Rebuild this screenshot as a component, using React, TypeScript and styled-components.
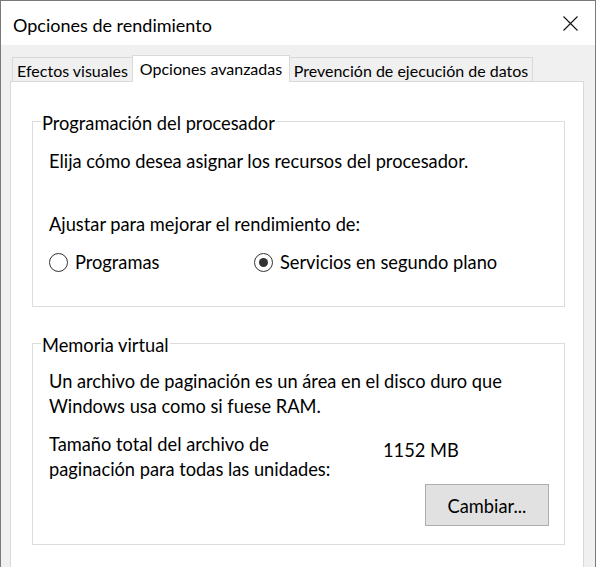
import React from "react";
import styled, { createGlobalStyle } from "styled-components";

const GlobalStyle = createGlobalStyle`
  html, body {
    margin: 0;
    padding: 0;
    overflow: hidden;
    background: #ffffff;
  }
  body {
    font-family: "Lato", "Noto Sans", sans-serif;
    color: #000000;
  }
`;

const Window = styled.div`
  width: 596px;
  height: 590px;
  box-sizing: border-box;
  border: 1px solid #7a7a7a;
  border-bottom: none;
  display: flex;
  flex-direction: column;
  background: #f0f0f0;
`;

const TitleBar = styled.div`
  height: 44px;
  background: #ffffff;
  display: flex;
  align-items: center;
  justify-content: space-between;
  padding-left: 12px;
`;

const Title = styled.div`
  font-size: 18px;
  line-height: 22px;
  padding-top: 3px;
`;

const CloseButton = styled.div`
  width: 47px;
  height: 44px;
  display: flex;
  align-items: center;
  justify-content: center;
  margin-right: 1px;
`;

const Body = styled.div`
  flex: 1;
  display: flex;
  flex-direction: column;
  padding: 10px 11px 0 9px;
`;

const TabStrip = styled.div`
  display: flex;
  align-items: flex-end;
  height: 26px;
  padding-left: 2px;
`;

const Tab = styled.div<{ $w: number; $active?: boolean }>`
  width: ${(p) => p.$w}px;
  box-sizing: border-box;
  height: ${(p) => (p.$active ? 27 : 24)}px;
  margin-bottom: ${(p) => (p.$active ? -1 : 0)}px;
  padding-top: 2px;
  position: relative;
  z-index: ${(p) => (p.$active ? 1 : 0)};
  background: ${(p) => (p.$active ? "#ffffff" : "#f0f0f0")};
  border-top: 1px solid #d9d9d9;
  border-left: ${(p) => (p.$active ? "1px solid #d9d9d9" : "none")};
  border-right: ${(p) => (p.$active ? "1px solid #d9d9d9" : "none")};
  font-size: 16px;
  line-height: 22px;
  text-align: center;
  white-space: nowrap;

  &:first-child {
    border-left: 1px solid #d9d9d9;
  }
  &:last-child {
    border-right: 1px solid #d9d9d9;
  }
`;

const Panel = styled.div`
  flex: 1;
  background: #ffffff;
  border: 1px solid #d9d9d9;
  border-bottom: none;
  padding: 26px 18px 0 21px;
  display: flex;
  flex-direction: column;
  gap: 23px;
`;

const Group = styled.fieldset`
  margin: 0;
  padding: 0;
  min-width: 0;
  border: 1px solid #dcdcdc;
`;

const Caption = styled.legend`
  margin-left: 8px;
  padding: 4px 1px 0;
  font-size: 18.25px;
  line-height: 22px;
`;

const GroupContent = styled.div<{ $pt: number; $pb: number }>`
  padding: ${(p) => p.$pt}px 15px ${(p) => p.$pb}px 16px;
  display: flex;
  flex-direction: column;
`;

const Text = styled.div<{ $mt?: number; $lh?: number }>`
  font-size: 18.25px;
  line-height: ${(p) => p.$lh ?? 22}px;
  margin-top: ${(p) => p.$mt ?? 0}px;
`;

const RadioRow = styled.div`
  display: grid;
  grid-template-columns: 205px auto;
  margin-top: 16px;
`;

const RadioOption = styled.label`
  display: flex;
  align-items: center;
  gap: 7px;
  font-size: 18.25px;
  line-height: 22px;
`;

const RadioCircle = styled.span<{ $checked?: boolean }>`
  width: 19px;
  height: 19px;
  box-sizing: border-box;
  border: 1px solid #333333;
  border-radius: 50%;
  background: #ffffff;
  display: flex;
  align-items: center;
  justify-content: center;
  flex-shrink: 0;

  &::after {
    content: "";
    display: ${(p) => (p.$checked ? "block" : "none")};
    width: 9px;
    height: 9px;
    border-radius: 50%;
    background: #333333;
  }
`;

const InfoGrid = styled.div`
  display: grid;
  grid-template-columns: 334px auto;
  margin-top: 13px;
  font-size: 18.25px;
  line-height: 25px;
`;

const Value = styled.div`
  padding-top: 6px;
`;

const ButtonRow = styled.div`
  display: flex;
  justify-content: flex-end;
  margin-top: 2px;
`;

const Button = styled.button`
  width: 124px;
  height: 42px;
  box-sizing: border-box;
  background: #e1e1e1;
  border: 1px solid #adadad;
  border-radius: 0;
  font-family: "Lato", "Noto Sans", sans-serif;
  font-size: 18.25px;
  color: #000000;
  padding: 2px 0 0;
`;

export default function App() {
  return (
    <>
      <GlobalStyle />
      <Window>
        <TitleBar>
          <Title>Opciones de rendimiento</Title>
          <CloseButton>
            <svg width="15" height="15" viewBox="0 0 15 15">
              <path d="M0.5 0.5 L14.5 14.5 M14.5 0.5 L0.5 14.5" stroke="#111" strokeWidth="1.1" fill="none" />
            </svg>
          </CloseButton>
        </TitleBar>
        <Body>
          <TabStrip>
            <Tab $w={120}>Efectos visuales</Tab>
            <Tab $w={158} $active>
              Opciones avanzadas
            </Tab>
            <Tab $w={243}>Prevención de ejecución de datos</Tab>
          </TabStrip>
          <Panel>
            <Group>
              <Caption>Programación del procesador</Caption>
              <GroupContent $pt={16} $pb={33}>
                <Text>Elija cómo desea asignar los recursos del procesador.</Text>
                <Text $mt={41}>Ajustar para mejorar el rendimiento de:</Text>
                <RadioRow>
                  <RadioOption>
                    <RadioCircle />
                    Programas
                  </RadioOption>
                  <RadioOption>
                    <RadioCircle $checked />
                    Servicios en segundo plano
                  </RadioOption>
                </RadioRow>
              </GroupContent>
            </Group>
            <Group>
              <Caption>Memoria virtual</Caption>
              <GroupContent $pt={13} $pb={18}>
                <Text $lh={25}>
                  Un archivo de paginación es un área en el disco duro que Windows usa como si fuese RAM.
                </Text>
                <InfoGrid>
                  <div>
                    Tamaño total del archivo de
                    <br />
                    paginación para todas las unidades:
                  </div>
                  <Value>1152 MB</Value>
                </InfoGrid>
                <ButtonRow>
                  <Button>Cambiar...</Button>
                </ButtonRow>
              </GroupContent>
            </Group>
          </Panel>
        </Body>
      </Window>
    </>
  );
}
